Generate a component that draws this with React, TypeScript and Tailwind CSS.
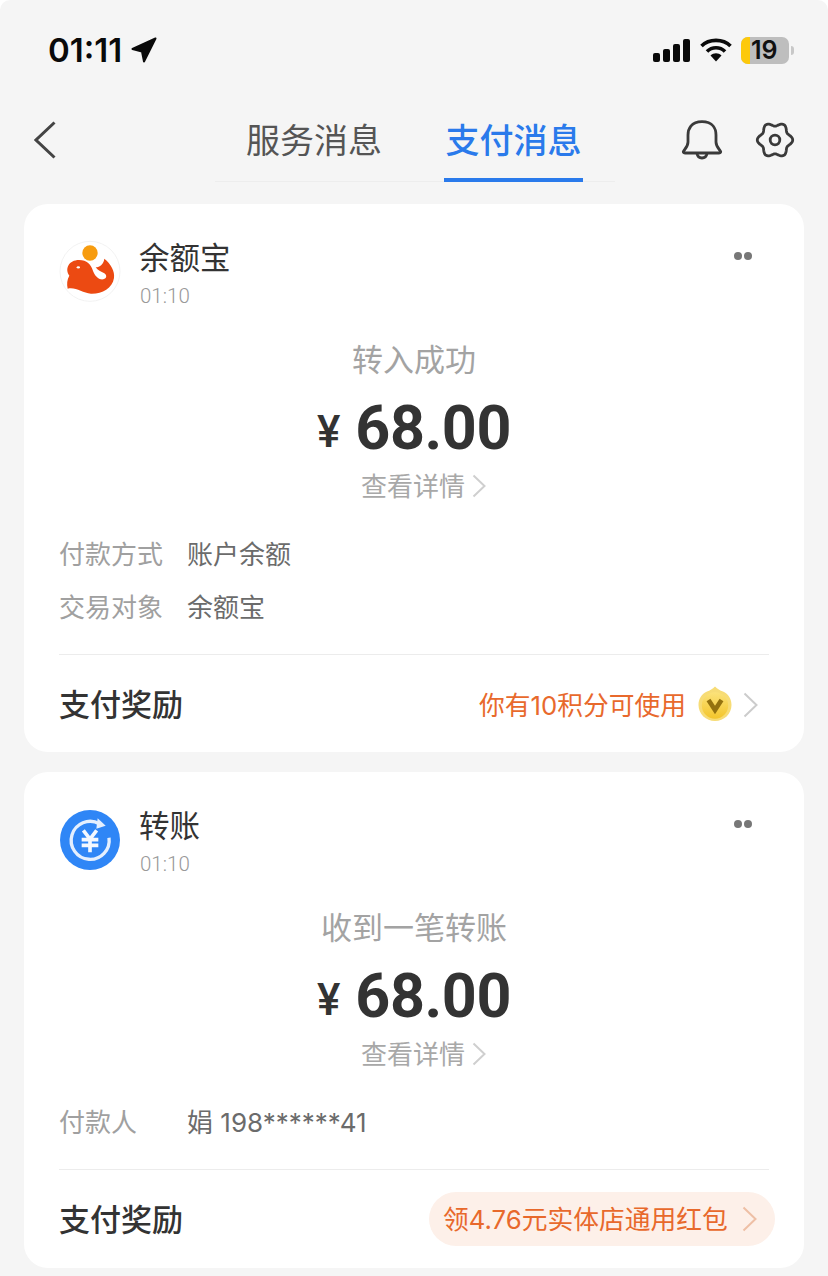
import React from "react";

const MIXED = 'Inter, "Noto Sans CJK SC", "Noto Sans", sans-serif';

function gearPath() {
  const pts: string[] = [];
  for (let i = 0; i < 120; i++) {
    const t = (i / 120) * Math.PI * 2;
    const r = 15.8 + 1.9 * Math.cos(6 * t);
    pts.push(`${(20 + r * Math.cos(t)).toFixed(2)} ${(20 + r * Math.sin(t)).toFixed(2)}`);
  }
  return "M" + pts.join(" L") + " Z";
}

function Chevron({ w, h, color, sw = 2 }: { w: number; h: number; color: string; sw?: number }) {
  return (
    <svg width={w} height={h} viewBox={`0 0 ${w} ${h}`} fill="none" className="block shrink-0">
      <path d={`M1.5 1.5 L${w - 1.5} ${h / 2} L1.5 ${h - 1.5}`} stroke={color} strokeWidth={sw} />
    </svg>
  );
}

function WhaleLogo() {
  return (
    <svg width="62" height="62" viewBox="12 12 186 186" className="block shrink-0 overflow-visible">
      <circle cx="105" cy="100" r="90" fill="#fff" stroke="#efefef" strokeWidth="2.5" />
      <circle cx="105" cy="45" r="23" fill="#f79c0f" />
      <path
        d="M38 152 C35 138 36 124 43 113 C28 92 42 66 72 66 C96 66 108 80 113 96 C118 112 130 126 145 124 C156 122 156 111 148 106 C138 101 128 97 122 88 C135 88 146 78 148 62 C168 78 180 100 177 120 C172 152 140 168 108 167 C82 165 62 146 38 152 Z"
        fill="#ec4a12"
      />
      <ellipse cx="70" cy="88" rx="5" ry="3.5" fill="#fff" />
    </svg>
  );
}

function TransferLogo() {
  return (
    <svg width="62" height="62" viewBox="12 15 186 186" className="block shrink-0 overflow-visible">
      <circle cx="105" cy="105" r="90" fill="#2f86f6" />
      <path d="M133 56 A57 57 0 1 0 162 98" fill="none" stroke="#e4effe" strokeWidth="10" />
      <path d="M128 40 L152 62 L124 71 Z" fill="#e4effe" />
      <path
        d="M85 76 L105 102 L125 76 M80 104 H130 M80 121 H130 M105 100 V142"
        fill="none"
        stroke="#f4f8fe"
        strokeWidth="11"
      />
    </svg>
  );
}

function Coin() {
  return (
    <svg width="34" height="36" viewBox="0 0 34 36" className="block shrink-0">
      <defs>
        <linearGradient id="coinFill" x1="0" y1="0" x2="0" y2="1">
          <stop offset="0" stopColor="#fbe27a" />
          <stop offset="1" stopColor="#f3c52b" />
        </linearGradient>
      </defs>
      <path d="M17 0.5 C19.5 3 22 4.5 25 5.5 C30.5 8 33.5 13 33.5 19 C33.5 28 26 35 17 35 C8 35 0.5 28 0.5 19 C0.5 13 3.5 8 9 5.5 C12 4.5 14.5 3 17 0.5 Z" fill="#f7dc76" />
      <circle cx="17" cy="19.5" r="13.2" fill="url(#coinFill)" />
      <path d="M10.5 14 L17 24 L23.5 14" fill="none" stroke="#94720f" strokeWidth="4.6" />
    </svg>
  );
}

function Row({ label, value }: { label: string; value: string }) {
  return (
    <div className="flex h-[40px] items-center pt-[2px] text-[26px] leading-[36px]">
      <span className="w-[128px] text-[#a0a0a0]">{label}</span>
      <span className="text-[#6b6b6b]">{value}</span>
    </div>
  );
}

function Card({
  logo,
  name,
  title,
  rows,
  reward,
}: {
  logo: React.ReactNode;
  name: string;
  title: string;
  rows: React.ReactNode;
  reward: React.ReactNode;
}) {
  return (
    <section className="mx-[24px] rounded-[24px] bg-white px-[35px]">
      <div className="flex h-[136px] items-start pt-[38px]">
        {logo}
        <div className="ml-[18px]">
          <div className="-mt-[2px] h-[36px] text-[30.5px] leading-[36px] text-[#333]">{name}</div>
          <div className="ml-px mt-[7px] text-[20.5px] leading-[26px] text-[#999]" style={{ fontFamily: "Roboto, sans-serif", fontWeight: 300 }}>
            01:10
          </div>
        </div>
        <div className="ml-auto mr-[17px] mt-[10px] flex gap-[2px]">
          <span className="block h-[8px] w-[8px] rounded-full bg-[#777]" />
          <span className="block h-[8px] w-[8px] rounded-full bg-[#777]" />
        </div>
      </div>
      <div className="flex h-[40px] items-center justify-center text-[31px] text-[#a3a3a3]">{title}</div>
      <div className="mt-[8px] flex h-[80px] items-center justify-center text-[#333]">
        <span className="mr-[15px] mt-[8px] text-[44px] font-medium leading-none" style={{ fontFamily: "Roboto, sans-serif" }}>¥</span>
        <span className="text-[61px] font-bold leading-none tracking-[-0.4px]" style={{ fontFamily: "Roboto, sans-serif" }}>68.00</span>
      </div>
      <div className="flex h-[36px] items-center justify-center pl-[19px] text-[26px] leading-[32px] text-[#a8a8a8]">
        <span className="pt-[2px]">查看详情</span>
        <span className="ml-[7px]"><Chevron w={14} h={24} color="#cfcfcf" /></span>
      </div>
      <div className="mt-[30px] flex flex-col gap-[13px]">{rows}</div>
      <div className="mt-[27px] h-px bg-[#ececec]" />
      {reward}
    </section>
  );
}

export default function App() {
  return (
    <div className="h-[1276px] w-[828px] overflow-hidden rounded-t-[10px] bg-[#f5f5f5]" style={{ fontFamily: MIXED }}>
      <header className="flex h-[100px] items-start justify-between pl-[48px] pr-[34px] pt-[31px]">
        <div className="flex h-[38px] items-center">
          <span className="text-[33px] font-semibold leading-[38px] text-[#0a0a0a]" style={{ fontFamily: "Inter, sans-serif" }}>01:11</span>
          <svg width="26" height="26" viewBox="0 0 26 26" className="ml-[9px] block">
            <path d="M24.5 1.5 L1.5 12 L11 14.5 L13 24.5 Z" fill="#0a0a0a" stroke="#0a0a0a" strokeWidth="2" strokeLinejoin="round" />
          </svg>
        </div>
        <div className="flex h-[38px] items-center">
          <div className="flex items-end gap-[3px]">
            <span className="block h-[9px] w-[7px] rounded-[2px] bg-[#0a0a0a]" />
            <span className="block h-[13px] w-[7px] rounded-[2px] bg-[#0a0a0a]" />
            <span className="block h-[18px] w-[7px] rounded-[2px] bg-[#0a0a0a]" />
            <span className="block h-[23px] w-[7px] rounded-[2px] bg-[#0a0a0a]" />
          </div>
          <svg width="32" height="24" viewBox="0 0 32 24" fill="none" className="ml-[10px] block">
            <path d="M1.5 8 C9 0.5 23 0.5 30.5 8" stroke="#0a0a0a" strokeWidth="3.6" />
            <path d="M7 13.5 C12 8.5 20 8.5 25 13.5" stroke="#0a0a0a" strokeWidth="3.6" />
            <path d="M10.5 17.5 L16 23.5 L21.5 17.5 C18.5 14.5 13.5 14.5 10.5 17.5 Z" fill="#0a0a0a" />
          </svg>
          <div className="ml-[9px] flex h-[27px] w-[48px] rounded-[7px] bg-[#bebebe]">
            <span className="block h-full w-[9px] rounded-l-[7px] bg-[#fdc90b]" />
            <span className="ml-[1px] text-[25px] font-semibold leading-[27px] text-[#111]" style={{ fontFamily: "Inter, sans-serif" }}>19</span>
          </div>
          <span className="ml-[2px] block h-[9px] w-[3px] rounded-r-full bg-[#c8c8c8]" />
        </div>
      </header>

      <nav className="flex h-[82px] items-start pl-[34px]">
        <svg width="23" height="38" viewBox="0 0 23 38" fill="none" className="mt-[21px] block shrink-0">
          <path d="M20.5 1.5 L2 19 L20.5 36.5" stroke="#444" strokeWidth="3" />
        </svg>
        <div className="ml-[158px] flex h-[82px] w-[400px] shrink-0 justify-start border-b border-[#ededed] pl-[31px] text-[34px] leading-[44px]">
          <div className="flex h-[78px] items-center pt-[3px] text-[#555]">服务消息</div>
          <div className="ml-[62px] flex h-[82px] w-[139px] items-center justify-center border-b-[4px] border-[#2a7aeb] pt-[3px] font-medium text-[#2a7aeb]">支付消息</div>
        </div>
        <svg width="42" height="41" viewBox="0 0 42 41" fill="none" className="ml-[66px] mt-[20px] block shrink-0">
          <path d="M21 1.7 C32 1.7 35 9 35 15 V22 C35 26 37 28 39 30.5 C40.5 32 39.5 33 38 33 H4 C2.5 33 1.5 32 3 30.5 C5 28 7 26 7 22 V15 C7 9 10 1.7 21 1.7 Z" stroke="#3a3a3a" strokeWidth="2.8" strokeLinejoin="round" />
          <path d="M16 33.5 C17 39.5 25 39.5 26 33.5" stroke="#3a3a3a" strokeWidth="2.8" />
        </svg>
        <svg width="40" height="40" viewBox="0 0 40 40" fill="none" className="ml-[32px] mt-[20px] block shrink-0">
          <path d={gearPath()} stroke="#3a3a3a" strokeWidth="2.8" strokeLinejoin="round" />
          <circle cx="20" cy="20" r="4.8" stroke="#3a3a3a" strokeWidth="2.8" />
        </svg>
      </nav>

      <main className="mt-[22px] flex flex-col gap-[20px]">
        <Card
          logo={<WhaleLogo />}
          name="余额宝"
          title="转入成功"
          rows={
            <>
              <Row label="付款方式" value="账户余额" />
              <Row label="交易对象" value="余额宝" />
            </>
          }
          reward={
            <div className="flex h-[97px] items-center justify-between pt-[2px]">
              <span className="text-[31px] font-medium leading-[40px] text-[#333]">支付奖励</span>
              <div className="flex items-center text-[25.75px] leading-[36px] text-[#e8692c]">
                <span className="pt-[2px]">你有10积分可使用</span>
                <span className="ml-[12px] -mt-[2px]"><Coin /></span>
                <span className="ml-[11px] mr-[11px]"><Chevron w={15} h={26} color="#cccccc" /></span>
              </div>
            </div>
          }
        />
        <Card
          logo={<TransferLogo />}
          name="转账"
          title="收到一笔转账"
          rows={<Row label="付款人" value="娟 198******41" />}
          reward={
            <div className="flex h-[98px] items-center justify-between">
              <span className="pt-[2px] text-[31px] font-medium leading-[40px] text-[#333]">支付奖励</span>
              <div className="-mr-[6px] flex h-[54px] w-[346px] items-center rounded-full bg-[#fdf0e9] pl-[14px] text-[25.75px] leading-[36px] text-[#e8692c]">
                <span className="pt-[2px]">领4.76元实体店通用红包</span>
                <span className="ml-auto mr-[18px]"><Chevron w={15} h={26} color="#eebfa5" /></span>
              </div>
            </div>
          }
        />
      </main>
    </div>
  );
}
